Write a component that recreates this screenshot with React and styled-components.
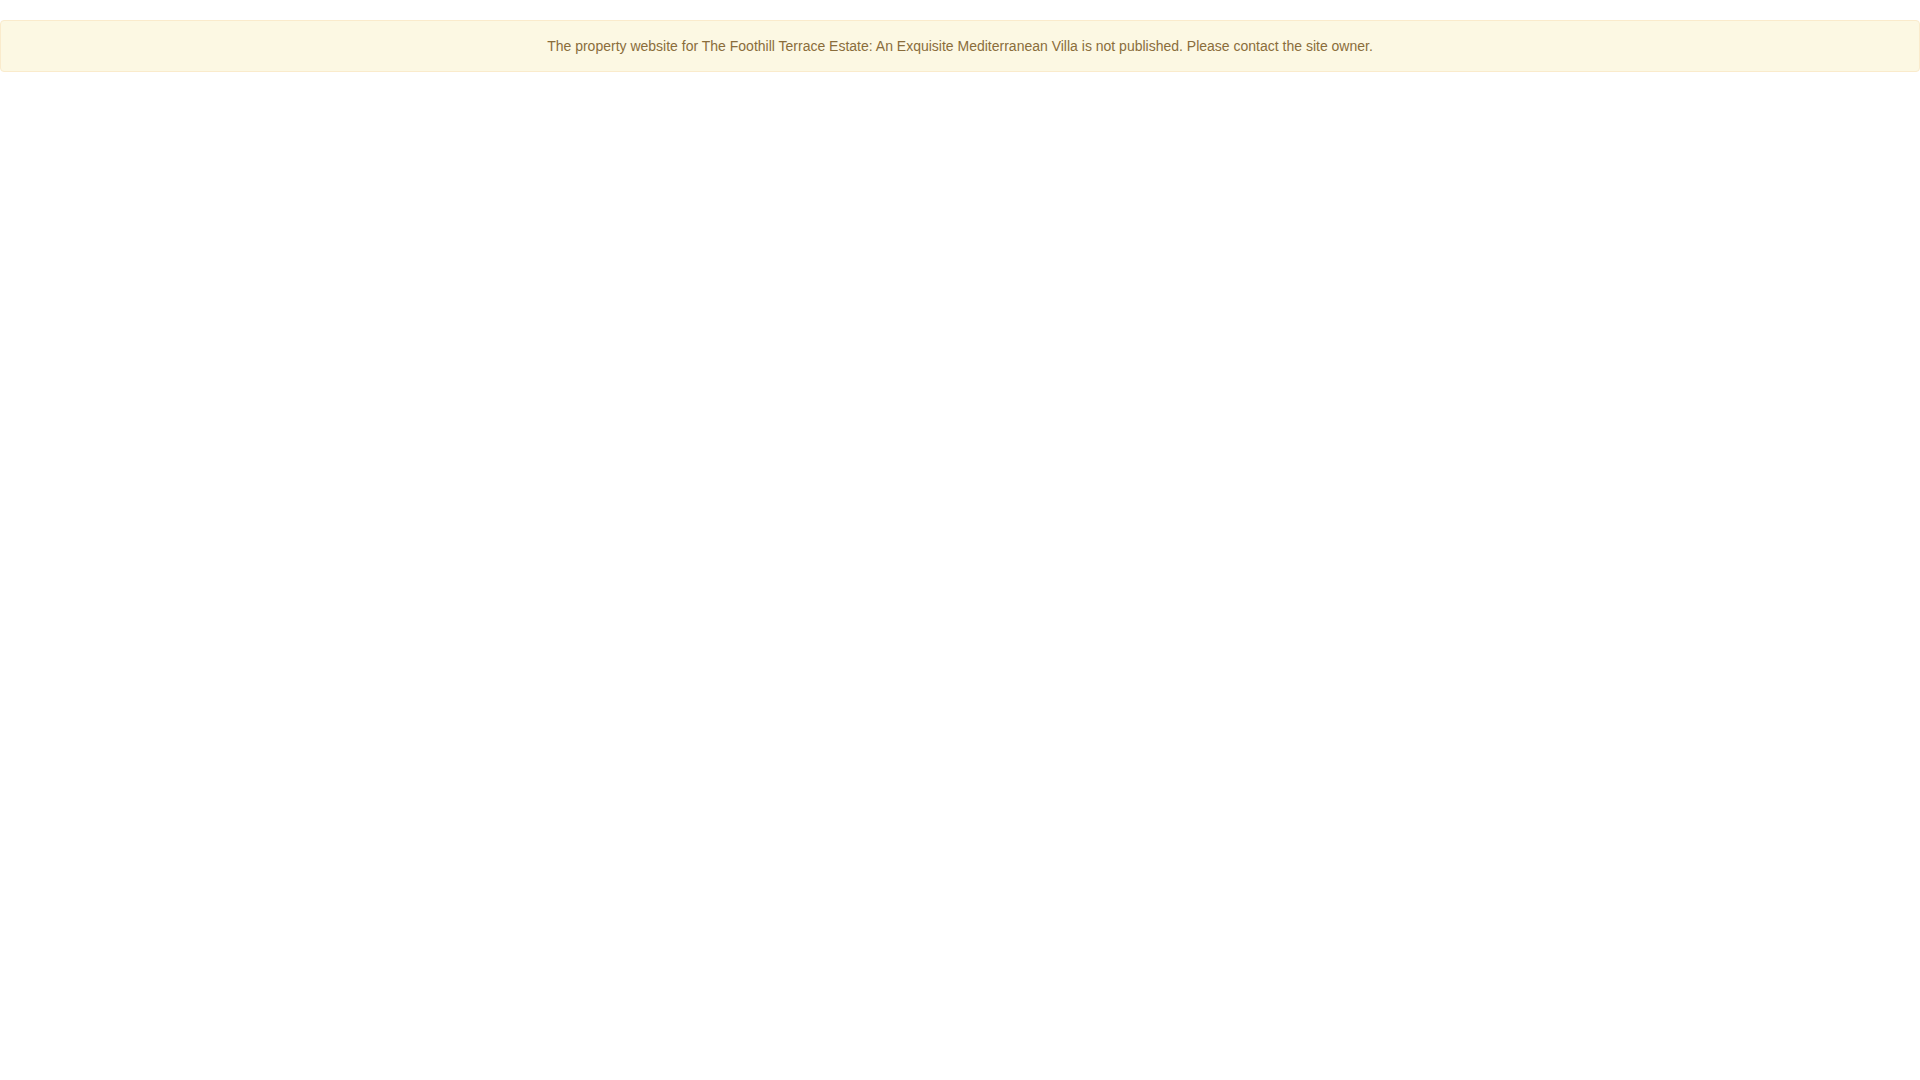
import styled, { createGlobalStyle } from "styled-components";

const GlobalStyle = createGlobalStyle`
  html, body {
    margin: 0;
    padding: 0;
    background: #fff;
  }
  body {
    font-family: "Liberation Sans", Arial, Helvetica, sans-serif;
    font-size: 14px;
    line-height: 1.42857143;
    color: #333;
  }
  * {
    box-sizing: border-box;
  }
`;

const Page = styled.div`
  padding-top: 20px;
`;

const Alert = styled.div`
  padding: 15px;
  margin-bottom: 20px;
  border: 1px solid #faebcc;
  border-radius: 4px;
  background-color: #fcf8e3;
  color: #8a6d3b;
  text-align: center;
  font-size: 14px;
  line-height: 20px;
`;

const App = () => {
  return (
    <>
      <GlobalStyle />
      <Page>
        <Alert>
          The property website for The Foothill Terrace Estate: An Exquisite
          Mediterranean Villa is not published. Please contact the site owner.
        </Alert>
      </Page>
    </>
  );
};

export default App;
